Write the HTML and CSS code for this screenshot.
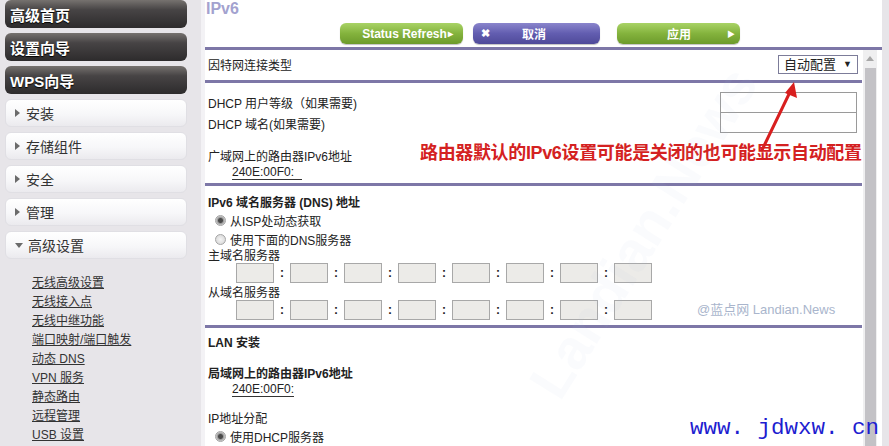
FILE: index.html
```html
<!DOCTYPE html>
<html lang="zh-CN">
<head>
  <meta charset="UTF-8" />
  <title>IPv6</title>
  <link rel="stylesheet" href="styles.css">
</head>
<body>
  <div class="page">
    <aside class="sidebar">
      <div class="menu-dark">高级首页</div>
      <div class="menu-dark">设置向导</div>
      <div class="menu-dark">WPS向导</div>
      <div class="menu-light"><span class="tri"></span>安装</div>
      <div class="menu-light"><span class="tri"></span>存储组件</div>
      <div class="menu-light"><span class="tri"></span>安全</div>
      <div class="menu-light"><span class="tri"></span>管理</div>
      <div class="menu-light"><span class="tri down"></span>高级设置</div>
      <ul class="sublinks">
        <li><a href="#">无线高级设置</a></li>
        <li><a href="#">无线接入点</a></li>
        <li><a href="#">无线中继功能</a></li>
        <li><a href="#">端口映射/端口触发</a></li>
        <li><a href="#">动态 DNS</a></li>
        <li><a href="#">VPN 服务</a></li>
        <li><a href="#">静态路由</a></li>
        <li><a href="#">远程管理</a></li>
        <li><a href="#">USB 设置</a></li>
      </ul>
    </aside>

    <main class="main">
      <div class="head">
        <h1>IPv6</h1>
        <div class="actions">
          <button class="btn green refresh">Status Refresh<span class="small-arrow">▸</span></button>
          <button class="btn purple cancel"><span class="x">✖</span>取消</button>
          <button class="btn green apply">应用<span class="play">▶</span></button>
        </div>
      </div>

      <div class="frame">
        <div class="content">
          <section class="sec sec-type">
            <span>因特网连接类型</span>
            <div class="select">自动配置<span class="caret">▼</span></div>
          </section>

          <section class="sec sec-dhcp">
            <div class="field-row"><span>DHCP 用户等级（如果需要)</span><div class="text-box"></div></div>
            <div class="field-row second"><span>DHCP 域名(如果需要)</span><div class="text-box"></div></div>
            <div class="addr-label">广域网上的路由器IPv6地址</div>
            <div class="addr"><span class="addr-val wide">240E:00F0:</span></div>
            <div class="note">路由器默认的IPv6设置可能是关闭的也可能显示自动配置</div>
          </section>

          <section class="sec sec-dns">
            <div class="sec-title">IPv6 域名服务器 (DNS) 地址</div>
            <div class="radio-row"><span class="radio checked"></span>从ISP处动态获取</div>
            <div class="radio-row"><span class="radio"></span>使用下面的DNS服务器</div>
            <div class="small-label">主域名服务器</div>
            <div class="ip-row">
              <span class="ip-box"></span><span class="colon">:</span>
              <span class="ip-box"></span><span class="colon">:</span>
              <span class="ip-box"></span><span class="colon">:</span>
              <span class="ip-box"></span><span class="colon">:</span>
              <span class="ip-box"></span><span class="colon">:</span>
              <span class="ip-box"></span><span class="colon">:</span>
              <span class="ip-box"></span><span class="colon">:</span>
              <span class="ip-box"></span>
            </div>
            <div class="small-label second">从域名服务器</div>
            <div class="ip-row">
              <span class="ip-box"></span><span class="colon">:</span>
              <span class="ip-box"></span><span class="colon">:</span>
              <span class="ip-box"></span><span class="colon">:</span>
              <span class="ip-box"></span><span class="colon">:</span>
              <span class="ip-box"></span><span class="colon">:</span>
              <span class="ip-box"></span><span class="colon">:</span>
              <span class="ip-box"></span><span class="colon">:</span>
              <span class="ip-box"></span>
              <span class="credit">@蓝点网 Landian.News</span>
            </div>
          </section>

          <section class="sec sec-lan">
            <div class="sec-title">LAN 安装</div>
            <div class="addr-label bold">局域网上的路由器IPv6地址</div>
            <div class="addr"><span class="addr-val">240E:00F0:</span></div>
            <div class="small-label ip-assign">IP地址分配</div>
            <div class="radio-row"><span class="radio checked"></span>使用DHCP服务器</div>
          </section>

          <!-- red arrow drawn over the form -->
          <svg class="arrow" width="60" height="80" viewBox="0 0 60 80">
            <line x1="10" y1="72" x2="38" y2="14" stroke="#d81f1f" stroke-width="3" stroke-linecap="round"/>
            <polygon points="42,4 45,20 33,15" fill="#d81f1f"/>
          </svg>
          <div class="faint-mark">Landian.News</div>
        </div>

        <div class="scroll">
          <div class="scroll-up"></div>
          <div class="thumb"></div>
        </div>
      </div>
    </main>
  </div>

  <div class="site-mark">www. jdwxw. cn</div>
</body>
</html>
```

FILE: styles.css
```css
body {
  margin: 0;
  font-family: "Liberation Sans", "Noto Sans CJK SC", sans-serif;
  font-size: 12px;
  color: #222;
  background-color: #e7e5e9;
  overflow: hidden;
}
.page {
  display: flex;
  height: 446px;
}

/* sidebar */
.sidebar {
  width: 196px;
  padding-left: 5px;
  flex-shrink: 0;
}
.menu-dark,
.menu-light {
  width: 182px;
  height: 28px;
  box-sizing: border-box;
  border-radius: 6px;
  margin-bottom: 5px;
  display: flex;
  align-items: center;
}
.menu-dark {
  background: linear-gradient(#76726f, #474445 35%, #2d2b2c);
  color: #fff;
  font-size: 15px;
  font-weight: bold;
  padding-left: 5px;
  text-shadow: 0 1px 1px #000;
}
.menu-light {
  background: linear-gradient(#ffffff, #f7f7f9 55%, #ebeaee);
  border: 1px solid #e0dfe4;
  color: #333;
  font-size: 14px;
  padding-left: 9px;
}
.tri {
  width: 0;
  height: 0;
  border-top: 4px solid transparent;
  border-bottom: 4px solid transparent;
  border-left: 5px solid #6b6b6b;
  margin-right: 6px;
}
.tri.down {
  border-left: 4px solid transparent;
  border-right: 4px solid transparent;
  border-top: 5px solid #6b6b6b;
  border-bottom: 0;
  margin-right: 5px;
}
.sublinks {
  list-style: none;
  margin: 15px 0 0;
  padding-left: 27px;
}
.sublinks li {
  line-height: 19px;
}
.sublinks a {
  color: #333;
  text-decoration: underline;
}

/* main panel */
.main {
  width: 677px;
  border-left: 4px solid #f3f2f5;
  background-color: #fff;
  flex-shrink: 0;
}
.head {
  height: 47px;
  border-bottom: 3px solid #7d77a7;
}
.head h1 {
  margin: 0;
  padding-left: 1px;
  font-size: 16px;
  line-height: 18px;
  color: #a3a2cf;
}
.actions {
  display: flex;
  margin-top: 5px;
  padding-left: 135px;
}
.btn {
  height: 21px;
  border: none;
  border-radius: 6px;
  color: #fff;
  font-family: inherit;
  font-size: 12px;
  font-weight: bold;
  padding: 0;
  display: flex;
  align-items: center;
  box-shadow: 0 1px 1px rgba(0,0,0,0.25);
}
.green {
  background: linear-gradient(#a9d366, #84b33d 50%, #6c9a2b);
}
.purple {
  background: linear-gradient(#8a85cc, #625db0 50%, #4f4a99);
}
.refresh {
  width: 123px;
  justify-content: center;
  padding-left: 12px;
}
.small-arrow {
  font-size: 10px;
  margin-left: 1px;
}
.cancel {
  width: 127px;
  margin-left: 10px;
  padding-left: 8px;
}
.cancel .x {
  font-size: 11px;
  margin-right: 32px;
}
.apply {
  width: 123px;
  margin-left: 17px;
  padding-left: 50px;
}
.play {
  font-size: 8px;
  margin-left: 36px;
}

.frame {
  display: flex;
}
.content {
  width: 657px;
  position: relative;
  flex-shrink: 0;
}
.sec {
  border-bottom: 3px solid #7d77a7;
  padding: 0 5px 0 3px;
  box-sizing: border-box;
}
.sec-type {
  height: 33px;
  display: flex;
  justify-content: space-between;
  align-items: center;
  padding-bottom: 2px;
}
.select {
  width: 80px;
  height: 19px;
  box-sizing: border-box;
  border: 1px solid #7c7c99;
  font-size: 13px;
  line-height: 17px;
  padding-left: 5px;
  display: flex;
  justify-content: space-between;
  margin-right: -1px;
}
.caret {
  font-size: 9px;
  padding-right: 5px;
}

.sec-dhcp {
  height: 103px;
  padding-top: 9px;
  position: relative;
}
.field-row {
  display: flex;
  justify-content: space-between;
  align-items: center;
  height: 21px;
}
.field-row.second {
  height: 20px;
}
.text-box {
  width: 137px;
  height: 21px;
  box-sizing: border-box;
  border: 1px solid #9a9a9a;
  background-color: #fff;
}
.field-row.second .text-box {
  height: 20px;
  border-top: none;
}
.addr-label {
  margin-top: 17px;
  line-height: 15px;
}
.addr-label.bold {
  font-weight: bold;
}
.addr {
  line-height: 14px;
  padding-left: 24px;
}
.addr-val {
  border-bottom: 1px solid #333;
}
.addr-val.wide {
  padding-right: 8px;
}
.note {
  position: absolute;
  left: 215px;
  top: 60px;
  font-size: 18px;
  line-height: 20px;
  font-weight: bold;
  letter-spacing: -0.35px;
  color: #d42121;
  white-space: nowrap;
}

.sec-dns {
  height: 142px;
  padding-top: 9px;
}
.sec-title {
  font-weight: bold;
  line-height: 16px;
}
.radio-row {
  display: flex;
  align-items: center;
  height: 19px;
  padding-left: 7px;
}
.radio {
  width: 11px;
  height: 11px;
  box-sizing: border-box;
  border-radius: 50%;
  border: 1px solid #a5a5a5;
  background: radial-gradient(#f4f4f4, #d2d2d2);
  margin-right: 4px;
}
.radio.checked {
  background: radial-gradient(#4a4a4a 0 2px, #9a9a9a 3px, #dcdcdc 5px);
}
.small-label {
  line-height: 14px;
}
.small-label.second {
  margin-top: 3px;
}
.ip-row {
  display: flex;
  align-items: center;
  height: 20px;
  padding-left: 28px;
}
.ip-box {
  width: 38px;
  height: 20px;
  box-sizing: border-box;
  border: 1px solid #a8a8a8;
  background-color: #ecebe8;
}
.colon {
  width: 16px;
  text-align: center;
  font-weight: bold;
}
.credit {
  margin-left: 45px;
  margin-top: -4px;
  font-size: 13px;
  color: #a9b5cc;
  white-space: nowrap;
}

.sec-lan {
  border-bottom: none;
  padding-top: 7px;
}
.sec-lan .addr-label {
  margin-top: 16px;
}
.ip-assign {
  margin-top: 15px;
  line-height: 16px;
}

.arrow {
  position: absolute;
  left: 547px;
  top: 28px;
}
.faint-mark {
  position: absolute;
  left: 250px;
  top: 150px;
  font-size: 56px;
  font-weight: bold;
  color: rgba(170, 185, 215, 0.06);
  transform: rotate(-58deg);
  white-space: nowrap;
  pointer-events: none;
}

/* scrollbar */
.scroll {
  width: 14px;
  margin-left: 1px;
  background-color: #efeff0;
  height: 396px;
}
.scroll-up {
  width: 0;
  height: 0;
  margin: 6px auto 0;
  border-left: 4px solid transparent;
  border-right: 4px solid transparent;
  border-bottom: 5px solid #a8a8a8;
}
.thumb {
  width: 11px;
  height: 380px;
  margin: 7px 0 0 2px;
  background-color: #c3c2c6;
}

.site-mark {
  position: absolute;
  left: 690px;
  top: 415px;
  font-family: "Liberation Mono", monospace;
  font-size: 22.5px;
  color: #1d1dd0;
  white-space: nowrap;
}
```
